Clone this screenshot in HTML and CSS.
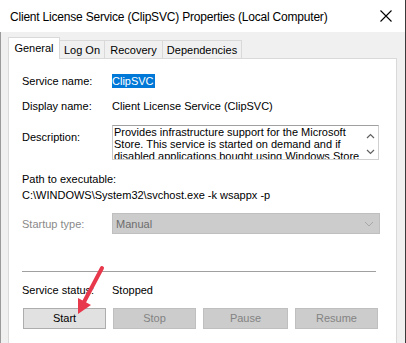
FILE: index.html
```html
<!DOCTYPE html>
<html>
<head>
<meta charset="utf-8">
<link rel="stylesheet" href="styles.css">
</head>
<body>
<div class="window">
  <div class="titlebar">
    <span class="title">Client License Service (ClipSVC) Properties (Local Computer)</span>
    <svg class="close" width="12" height="12" viewBox="0 0 12 12"><path d="M0.5 0.5 L11.5 11.5 M11.5 0.5 L0.5 11.5" stroke="#000" stroke-width="1.1" fill="none"/></svg>
  </div>
  <div class="body">
    <div class="tabs">
      <div class="tab active">General</div>
      <div class="tab t-logon">Log On</div>
      <div class="tab t-recovery">Recovery</div>
      <div class="tab t-deps">Dependencies</div>
    </div>
    <div class="panel">
      <div class="row r1"><span class="label">Service name:</span><span class="sel">ClipSVC</span></div>
      <div class="row r2"><span class="label">Display name:</span><span class="value">Client License Service (ClipSVC)</span></div>
      <div class="row r3">
        <span class="label desc-label">Description:</span>
        <div class="descbox">
          <div class="desctext">Provides infrastructure support for the Microsoft Store. This service is started on demand and if disabled applications bought using Windows Store will not behave correctly.</div>
          <div class="scroll">
            <svg width="9" height="6" viewBox="0 0 9 6"><path d="M1 5 L4.5 1.5 L8 5" stroke="#606060" stroke-width="1.2" fill="none"/></svg>
            <svg width="9" height="6" viewBox="0 0 9 6"><path d="M1 1 L4.5 4.5 L8 1" stroke="#606060" stroke-width="1.2" fill="none"/></svg>
          </div>
        </div>
      </div>
      <div class="row r4">Path to executable:</div>
      <div class="row r5">C:\WINDOWS\System32\svchost.exe -k wsappx -p</div>
      <div class="row r6">
        <span class="label disabled st-label">Startup type:</span>
        <div class="combo"><span>Manual</span>
          <svg width="10" height="6" viewBox="0 0 10 6"><path d="M1 1 L5 5 L9 1" stroke="#a8a8a8" stroke-width="1" fill="none"/></svg>
        </div>
      </div>
      <div class="sep"></div>
      <div class="row r7"><span class="label">Service status:</span><span class="value">Stopped</span></div>
      <div class="buttons">
        <div class="btn">Start</div>
        <div class="btn off">Stop</div>
        <div class="btn off b-pause">Pause</div>
        <div class="btn off">Resume</div>
      </div>
    </div>
  </div>
  <svg class="arrow" width="406" height="343" viewBox="0 0 406 343">
    <line x1="102" y1="268" x2="84" y2="302" stroke="#e8384c" stroke-width="4" stroke-linecap="round"/>
    <polygon points="78,314 91,305 78,298" fill="#e8384c"/>
  </svg>
</div>
</body>
</html>
```
FILE: styles.css
```css
* { box-sizing: border-box; }
html, body { margin: 0; padding: 0; }
body {
  font-family: "Liberation Sans", Arial, sans-serif;
  font-size: 11px;
  color: #000;
  background: #fff;
}
.window {
  position: relative;
  width: 406px;
  height: 343px;
  overflow: hidden;
  border-right: 1px solid #3a3a3a;
  background: #f0f0f0;
}
.titlebar {
  height: 32px;
  background: #fff;
  display: flex;
  align-items: center;
  padding-left: 10px;
  position: relative;
}
.title {
  font-size: 12px;
  line-height: 16px;
  margin-top: 1px;
  letter-spacing: -0.2px;
}
.close {
  position: absolute;
  left: 380px;
  top: 10px;
}
.body {
  height: 311px;
  border-left: 1px solid #9a9a9a;
  padding-left: 7px;
  padding-top: 5px;
}
.tabs {
  display: flex;
  align-items: flex-end;
  height: 21px;
  position: relative;
  z-index: 2;
}
.tab {
  height: 18px;
  border: 1px solid #d9d9d9;
  border-bottom: none;
  background: #f0f0f0;
  line-height: 14px;
  padding-top: 2px;
  text-align: center;
  margin-left: -1px;
}
.tab.active {
  height: 22px;
  margin-bottom: -1px;
  background: #fff;
  width: 52px;
  margin-left: 0;
  padding-top: 3px;
  position: relative;
  z-index: 3;
}
.t-logon { width: 46px; }
.t-recovery { width: 59px; }
.t-deps { width: 80px; }
.panel {
  width: 389px;
  height: 300px;
  background: #fff;
  border: 1px solid #d9d9d9;
  padding-left: 13px;
  padding-top: 15px;
}
.row {
  display: flex;
  line-height: 14px;
  height: 14px;
}
.label {
  width: 90px;
  flex: none;
}
.sel {
  background: #0078d7;
  color: #fff;
  padding: 0 1px 0 0;
}
.r2 { margin-top: 11px; }
.r3 { margin-top: 12px; height: 35px; }
.desc-label { padding-top: 5px; }
.descbox {
  width: 267px;
  height: 35px;
  border: 1px solid #a9a9a9;
  border-color: #a0a0a0 #d0d0d0 #d0d0d0 #c8c8c8;
  display: flex;
  overflow: hidden;
}
.desctext {
  width: 250px;
  padding-left: 1px;
  padding-top: 0px;
  line-height: 12px;
  flex: none;
}
.scroll {
  flex: 1;
  display: flex;
  flex-direction: column;
  align-items: center;
  padding-top: 7px;
  gap: 10px;
}
.scroll svg { display: block; }
.r4 { margin-top: 12px; }
.r5 { margin-top: 2px; }
.r6 { margin-top: 11px; height: 21px; }
.disabled { color: #8a8a8a; }
.st-label { padding-top: 4px; }
.combo {
  width: 268px;
  height: 21px;
  background: #cccccc;
  border: 1px solid #bfbfbf;
  color: #6d6d6d;
  display: flex;
  align-items: center;
  justify-content: space-between;
  padding-left: 3px;
  padding-right: 5px;
}
.sep {
  margin-top: 37px;
  width: 354px;
  height: 1px;
  background: #a0a0a0;
}
.r7 { margin-top: 11px; }
.buttons {
  display: flex;
  gap: 7px;
  margin-top: 11px;
  padding-left: 1px;
}
.btn {
  width: 83px;
  height: 21px;
  border: 1px solid #adadad;
  background: #e1e1e1;
  text-align: center;
  line-height: 19px;
}
.btn.off {
  background: #cccccc;
  border-color: #bfbfbf;
  color: #838383;
}
.b-pause { width: 85px; }
.arrow {
  position: absolute;
  left: 0;
  top: 0;
  pointer-events: none;
}
```
